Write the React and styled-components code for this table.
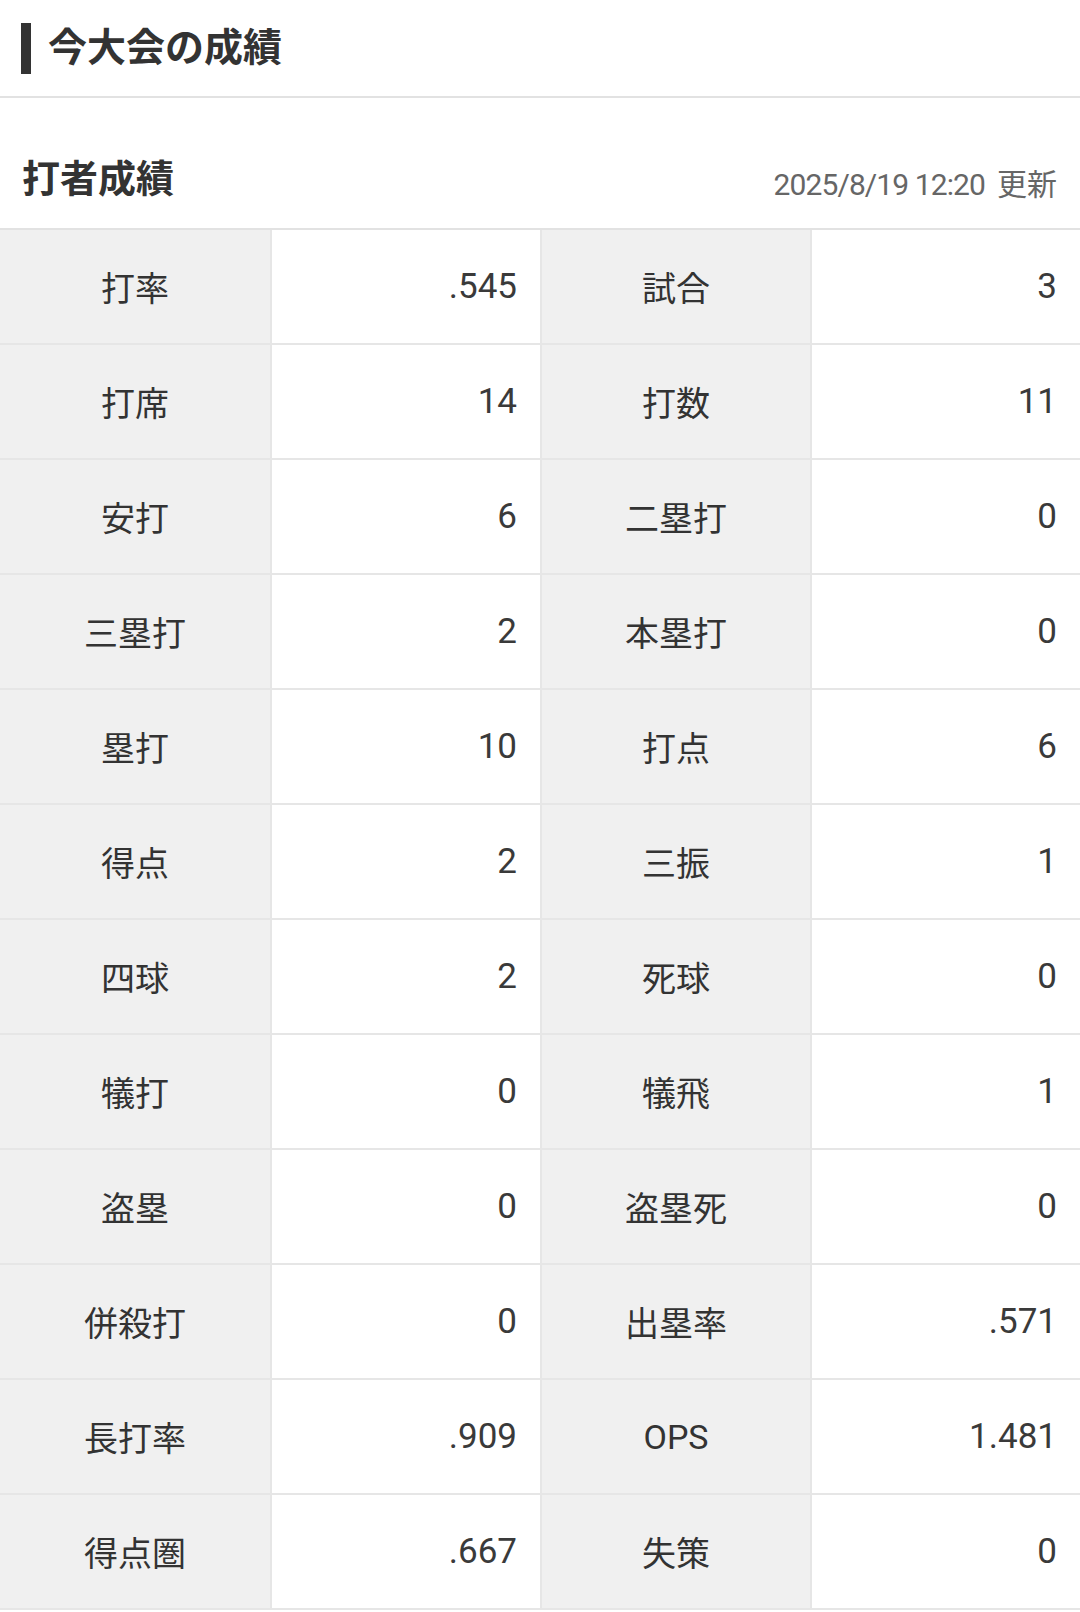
import React from 'react'
import styled, { createGlobalStyle } from 'styled-components'

const GlobalStyle = createGlobalStyle`
  html, body {
    margin: 0;
    padding: 0;
    background: #fff;
  }
  body {
    font-family: Roboto, "Noto Sans CJK JP", sans-serif;
    color: #333;
  }
`

const Page = styled.div`
  width: 1080px;
  background: #fff;
`

const PageHeader = styled.header`
  display: flex;
  align-items: center;
  height: 96px;
  padding-left: 21px;
  border-bottom: 2px solid #e2e2e2;
`

const AccentBar = styled.span`
  width: 10px;
  height: 51px;
  background: #333;
  margin-right: 17px;
`

const PageTitle = styled.h1`
  margin: 0;
  font-size: 39px;
  font-weight: 700;
  color: #333;
  line-height: 1.3;
`

const SectionHeader = styled.div`
  display: flex;
  align-items: flex-end;
  justify-content: space-between;
  height: 130px;
  box-sizing: border-box;
  padding: 0 23px 24px 22px;
`

const SectionTitle = styled.h2`
  margin: 0;
  font-size: 38px;
  font-weight: 700;
  line-height: 1.3;
  color: #333;
`

const Updated = styled.div`
  display: flex;
  align-items: baseline;
  font-size: 30px;
  line-height: 1.3;
  color: #666;
`

const Stamp = styled.span`
  letter-spacing: -0.9px;
  margin-right: 12px;
`

const Table = styled.div`
  border-top: 2px solid #e2e2e2;
`

const Row = styled.div`
  display: grid;
  grid-template-columns: repeat(4, 1fr);
  height: 115px;
  box-sizing: border-box;
  border-bottom: 2px solid #e6e6e6;
`

const Cell = styled.div`
  display: flex;
  align-items: center;
  justify-content: ${p => (p.$label ? 'center' : 'flex-end')};
  padding: 0 23px;
  background: ${p => (p.$label ? '#f0f0f0' : '#fff')};
  border-left: ${p => (p.$first ? 'none' : '2px solid #e6e6e6')};
  font-size: ${p => (p.$label ? '34px' : '35px')};
  color: ${p => (p.$label ? '#333' : '#3a3a3a')};
`

const stats = [
  ['打率', '.545', '試合', '3'],
  ['打席', '14', '打数', '11'],
  ['安打', '6', '二塁打', '0'],
  ['三塁打', '2', '本塁打', '0'],
  ['塁打', '10', '打点', '6'],
  ['得点', '2', '三振', '1'],
  ['四球', '2', '死球', '0'],
  ['犠打', '0', '犠飛', '1'],
  ['盗塁', '0', '盗塁死', '0'],
  ['併殺打', '0', '出塁率', '.571'],
  ['長打率', '.909', 'OPS', '1.481'],
  ['得点圏', '.667', '失策', '0']
]

export default function App() {
  return (
    <Page>
      <GlobalStyle />
      <PageHeader>
        <AccentBar />
        <PageTitle>今大会の成績</PageTitle>
      </PageHeader>
      <SectionHeader>
        <SectionTitle>打者成績</SectionTitle>
        <Updated>
          <Stamp>2025/8/19 12:20</Stamp>
          <span>更新</span>
        </Updated>
      </SectionHeader>
      <Table>
        {stats.map(([l1, v1, l2, v2]) => (
          <Row key={l1}>
            <Cell $label $first>{l1}</Cell>
            <Cell>{v1}</Cell>
            <Cell $label>{l2}</Cell>
            <Cell>{v2}</Cell>
          </Row>
        ))}
      </Table>
    </Page>
  )
}
